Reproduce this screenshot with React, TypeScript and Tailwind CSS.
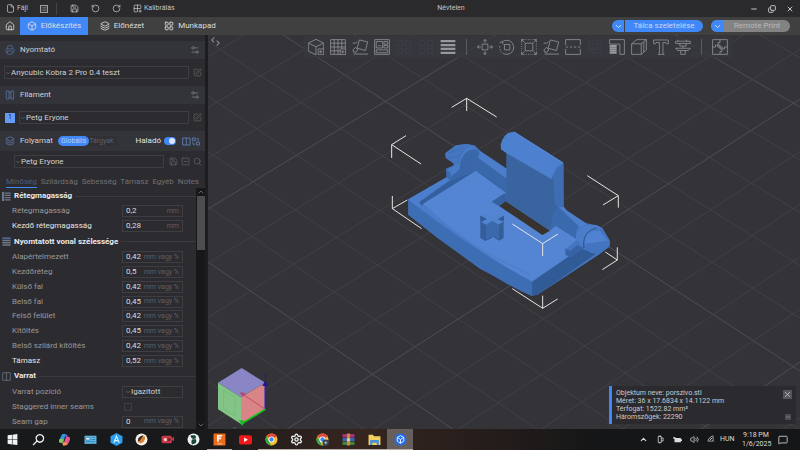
import type { ReactNode } from 'react'
import {
  Box,
  ChevronDown,
  ChevronUp,
  Copy,
  File,
  Grid2x2Plus,
  House,
  Layers,
  LayoutGrid,
  List,
  MessageSquare,
  Minus,
  Printer,
  RotateCcw,
  RotateCw,
  Save,
  Search,
  Settings,
  Settings2,
  SquareMinus,
  SquarePen,
  Volume2,
  Wifi,
  X,
} from 'lucide-react'

type Row = {
  id: string
  label: string
  value?: string
  unit?: string
  kind?: 'select' | 'check'
  strong?: boolean
}

type Group = { title: string; icon: 'stack' | 'lines' | 'seam'; rows: Row[] }

const groups: Group[] = [
  {
    title: 'Rétegmagasság',
    icon: 'stack',
    rows: [
      { id: 'layer', label: 'Rétegmagasság', value: '0,2', unit: 'mm' },
      { id: 'first-layer', label: 'Kezdő rétegmagasság', value: '0,28', unit: 'mm', strong: true },
    ],
  },
  {
    title: 'Nyomtatott vonal szélessége',
    icon: 'lines',
    rows: [
      { id: 'w-default', label: 'Alapértelmezett', value: '0,42', unit: 'mm vagy %' },
      { id: 'w-first', label: 'Kezdőréteg', value: '0,5', unit: 'mm vagy %' },
      { id: 'w-outer', label: 'Külső fal', value: '0,42', unit: 'mm vagy %' },
      { id: 'w-inner', label: 'Belső fal', value: '0,45', unit: 'mm vagy %' },
      { id: 'w-top', label: 'Felső felület', value: '0,42', unit: 'mm vagy %' },
      { id: 'w-infill', label: 'Kitöltés', value: '0,45', unit: 'mm vagy %' },
      { id: 'w-solid', label: 'Belső szilárd kitöltés', value: '0,42', unit: 'mm vagy %' },
      { id: 'w-support', label: 'Támasz', value: '0,52', unit: 'mm vagy %', strong: true },
    ],
  },
  {
    title: 'Varrat',
    icon: 'seam',
    rows: [
      { id: 'seam-pos', label: 'Varrat pozíció', value: 'Igazított', kind: 'select' },
      { id: 'staggered', label: 'Staggered inner seams', kind: 'check' },
      { id: 'seam-gap', label: 'Seam gap', value: '0', unit: 'mm vagy %' },
    ],
  },
]

const tabs = ['Minőség', 'Szilárdság', 'Sebesség', 'Támasz', 'Egyéb', 'Notes']

const plusBox = (
  <>
    <path d="M32 31h17v18H32z" fill="#36363c" />
    <path d="M40 35v10M35 40h10" />
  </>
)

const tilted = <path d="M23 3l26 6-7 27-26-7zM5 47h45M2 13h10l5-5M3 34l8-8 7 8-5 7H5z" />

type Tool = { name: string; art: ReactNode; dim?: boolean } | null

const tools: Tool[] = [
  {
    name: 'Hozzáadás',
    art: (
      <>
        <path d="M1 13L25 1l24 12-24 11zM1 13v25l24 11V24M49 13v18" />
        {plusBox}
      </>
    ),
  },
  {
    name: 'Tálca hozzáadása',
    art: (
      <>
        <path d="M2 2h46v46H2zM13 2v46M25 2v46M37 2v46M2 13h46M2 25h46M2 37h46" />
        {plusBox}
      </>
    ),
  },
  { name: 'Automatikus tájolás', art: tilted },
  {
    name: 'Elrendezés',
    art: <path d="M2 2h46v46H2zM7 8h20v20H7zM31 8h12v8H31zM31 20h12v8H31zM7 34h36v9H7zM12 23a6 6 0 0 1 10 0" />,
  },
  { name: 'Felosztás tárgyakra', dim: true, art: <path d="M5 5h16v16H5zM29 5h16v16H29zM5 29h16v16H5zM29 29h16v16H29z" /> },
  { name: 'Felosztás részekre', dim: true, art: <path d="M5 5h16v16H5zM29 5h16v16H29zM5 29h16v16H5zM29 29h16v16H29z" /> },
  { name: 'Változó rétegmagasság', art: <path d="M2 7h46M2 19h46M2 31h46M2 43h46" strokeWidth="7" /> },
  null,
  {
    name: 'Mozgatás',
    art: <path d="M16 16h18v18H16zM25 12V2M20 7l5-6 5 6M25 38v10M20 43l5 6 5-6M12 25H2M7 20l-6 5 6 5M38 25h10M43 20l6 5-6 5" />,
  },
  {
    name: 'Forgatás',
    art: (
      <>
        <path d="M17 17h17v17H17zM2 12l8-4 3 9" />
        <path d="M10 9a22 22 0 1 1 3 36" />
        <path d="M10 43a22 22 0 0 1-7-22" strokeDasharray="5 4" />
      </>
    ),
  },
  {
    name: 'Átméretezés',
    art: (
      <>
        <path d="M13 13h24v24H13zM2 11V2h9M39 2h9v9M48 39v9h-9M11 48H2v-9M2 2l9 9M48 2l-9 9M48 48l-9-9M2 48l9-9" />
        <path d="M15 2h22M15 48h22M2 15v22M48 15v22" strokeDasharray="3 4" />
      </>
    ),
  },
  { name: 'Lapra fektetés', art: tilted },
  { name: 'Vágás', art: <path d="M2 19V2h46v17M2 31v17h46V31M2 25h8M16 25h7M28 25h7M40 25h8" /> },
  { name: 'Egyesítés', dim: true, art: <path d="M6 6h28v28H6zM16 16h28v28H16z" /> },
  {
    name: 'Támasz festés',
    art: (
      <>
        <path d="M2 16V2h46v46H34V16z" />
        <path d="M2 22h22M2 29h22M2 36h22M2 43h22" strokeWidth="6" />
      </>
    ),
  },
  { name: 'Varrat festés', art: <path d="M2 15h30v33H2zM2 15L18 2h30L32 15M48 2v32L32 48M40 9v32" /> },
  { name: 'Szöveg', art: <path d="M2 3h46v12h-6l-2-4H31v33l4 4H16l4-4V11H10l-2 4H2z" /> },
  {
    name: 'Mérés',
    art: <path d="M2 7h46v7H2zM9 2v5M15 14v8h20v-8M2 29h46l-6 7H8zM18 36v12h14V36M25 22v7M36 2v5" />,
  },
  null,
  {
    name: 'Összeszerelés',
    art: <path d="M2 2h46v46H2zM25 2v9h-6v8h6v6M25 48v-9h6v-8h-6v-6M2 25h9v-6h7v6h7M48 25h-9v6h-7v-6h-7" />,
  },
]

const Toolbar = () => (
  <div className="absolute left-24 top-px flex h-[22px] items-center gap-[6px] bg-[#37383e]/80 px-1">
    {tools.map((tool, i) =>
      tool ? (
        <button key={tool.name} aria-label={tool.name} className={tool.dim ? 'text-[#3c414b]' : 'text-[#98989c]'}>
          <svg viewBox="0 0 50 50" className="size-4" fill="none" stroke="currentColor" strokeWidth="2.4">
            {tool.art}
          </svg>
        </button>
      ) : (
        <span key={i} className="mx-1 h-4 w-px bg-[#5a5a60]" />
      ),
    )}
  </div>
)

// Heavy bed lines as [y at x=208, y at x=800]; four light ones lie between each pair
const falling = [
  [-640, -390],
  [-440, -140],
  [-235, 107],
  [-14, 371],
  [262, 666],
  [560, 980],
]
const rising = [
  [-45, -392],
  [209, -150],
  [480, 99],
  [765, 362],
  [1065, 640],
]

const gridLines = (keys: number[][]) =>
  keys.slice(0, -1).flatMap(([l, r], i) =>
    [0, 1, 2, 3, 4].map((s) => ({
      heavy: s === 0,
      left: l + ((keys[i + 1][0] - l) * s) / 5,
      right: r + ((keys[i + 1][1] - r) * s) / 5,
    })),
  )

const bedLines = [...gridLines(falling), ...gridLines(rising)]

const BedGrid = () => (
  <g>
    {bedLines.map(({ heavy, left, right }, i) => (
      <path key={i} d={`M208 ${left}L800 ${right}`} stroke={heavy ? '#4e4e53' : '#404046'} />
    ))}
  </g>
)

const Model = () => (
  <g transform="translate(380 90) scale(.3333)">
    <g fill="none" stroke="#e6e6e6" strokeWidth="3">
      <path d="M215 52l45-27 90 56M260 25v38M78 137l-43 27 88 58M35 164v40M622 257l93 60-46 28M715 317v36M37 318v38l88 60M37 356l45-26M676 486l36 24-45 29M712 510v-38M397 596l91 59 45-28M488 655v-38" />
    </g>
    <path
      d="M85 328L200 262 198 236 222 226 215 210 196 203V190L228 166 260 162 286 167 300 184 380 236V188L363 178 362 162 380 135 403 125 550 218 551 350 560 362 612 398 650 406 668 415 690 452 688 470 655 495 475 613 456 618 300 536 170 442 85 374z"
      fill="#4475c0"
    />
    {/* front and right walls */}
    <path d="M85 330C150 375 190 410 270 462 330 502 400 545 456 575V618C400 597 300 536 170 442L85 374z" fill="#3d6db3" />
    <path d="M456 575L600 476 650 490 475 613 456 618z" fill="#315b97" />
    {/* rim and floor */}
    <path d="M85 328L215 253 285 242 140 325 118 338 190 392C270 450 380 520 456 560L575 490 600 476 456 575C330 510 200 415 85 330z" fill="#4b7ecd" />
    <path d="M118 336L215 267 240 252 286 242 150 330 124 347z" fill="#345f9e" />
    <path d="M128 342L288 243 380 308 335 335 488 435 527 407 592 448 556 478 572 494 456 572C350 520 230 430 128 342z" fill="#5385d2" />
    <path d="M120 350C220 425 330 505 452 553" fill="none" stroke="#4878c2" strokeWidth="2" />
    {/* rear wall */}
    <path d="M288 196L380 264V310L288 243z" fill="#3a67aa" />
    <path d="M288 180L300 182 380 236V266L292 202z" fill="#4b7dca" />
    {/* slot */}
    <path d="M335 335L376 308 380 336 360 349z" fill="#3761a0" />
    <path d="M358 348L378 334 510 422 487 435z" fill="#38332f" />
    {/* latch */}
    <path d="M380 188L514 266 550 222 551 350 538 372 510 422 378 334z" fill="#3a64a0" />
    <path d="M520 266C522 246 535 228 550 222V350L536 356 524 340z" fill="#3f6db2" />
    <path d="M363 162Q372 125 403 125L550 218Q522 232 514 267L380 190 363 178z" fill="#4d80cf" />
    <path d="M404 127L550 219" stroke="#5a8cda" strokeWidth="2" fill="none" />
    <path d="M534 350L551 350 560 362 606 396 588 420 588 446 527 407 510 422 520 372z" fill="#3b69ad" />
    <path d="M536 352L551 350 562 362 622 402 602 414z" fill="#4d7fcb" />
    {/* left pivot */}
    <path d="M196 190L228 166 262 162 285 167 250 176 232 228 200 206z" fill="#4576c0" />
    <path d="M205 190L250 172M204 204L240 198" stroke="#3d6db4" strokeWidth="3" />
    <path d="M232 232C236 192 252 168 278 168 296 170 302 184 296 196L288 242 212 272 200 262 198 237z" fill="#3b69ad" />
    <path d="M236 220C240 188 258 166 280 168L298 182 296 192C270 176 252 196 246 232L212 262V248L200 240z" fill="#4a7bc8" />
    <path d="M240 222C246 196 262 178 284 178 300 182 300 194 290 204L286 238 214 268 216 256 238 244z" fill="#3a67a9" />
    {/* right pivot */}
    <path d="M588 444C586 420 610 400 650 406L668 415 640 420C615 430 608 450 612 474z" fill="#4b7dca" />
    <path d="M612 474C606 438 630 412 664 420L690 454 688 470 655 494 632 488z" fill="#4374bf" />
    <path d="M614 462C610 436 630 418 660 422L684 452 638 458z" fill="#4f82d0" />
    <path d="M612 474C606 438 626 418 650 414" fill="none" stroke="#2c538b" strokeWidth="3" />
    <path d="M556 476L572 484 590 466 612 474 600 484 572 502 556 494z" fill="#3763a6" />
    {/* cross */}
    <path d="M301 377L336 398V444L316 453 301 443zM371 377L338 396V440L357 452 371 444z" fill="#345d9a" />
    <path d="M318 403L338 390 357 403V450L338 438 318 450z" fill="#3c69ac" />
    <path d="M301 377L318 370 336 379 355 370 371 377 354 388 371 394 357 404 337 393 318 404 303 396 320 386z" fill="#5183cf" />
    <path d="M301 377L320 386 303 396zM371 377L354 388 371 394z" fill="#315a96" />
    <g fill="none" stroke="#e6e6e6" strokeWidth="3">
      <path d="M397 402l91 59 46-29M488 461v37" />
    </g>
  </g>
)

const AxisCube = () => (
  <g transform="translate(205 350) scale(.3333)">
    <path d="M110 54L181 98 108 142 39 98z" fill="#8a86c6" />
    <path d="M39 98L108 142V222L39 178z" fill="#82c586" />
    <path d="M108 142L181 98V178L108 222z" fill="#d98588" />
    <path d="M56 120v56l34 22v-56z" fill="none" stroke="#72b57a" strokeWidth="2" />
    <path d="M181 178V100" stroke="#2521c5" strokeWidth="5" />
    <path d="M172 108l9-17 9 17zM177 74h8l-8 9h8" fill="#1c1896" />
    <path d="M181 178L112 132" stroke="#c54b5d" strokeWidth="3" />
    <path d="M104 126l18 4-9 10z" fill="#b04a67" />
    <path d="M181 178L112 220" stroke="#12c022" strokeWidth="5" />
    <path d="M102 210l20 3-11 15z" fill="#12c022" />
    <path d="M84 231l5 5 5-5" stroke="#1c7a24" strokeWidth="3" fill="none" />
  </g>
)

const Viewport = () => (
  <main className="relative min-w-0 flex-1 overflow-hidden bg-[#343338]">
    <svg viewBox="208 35 592 394" preserveAspectRatio="xMidYMid slice" className="absolute inset-0 size-full">
      <BedGrid />
      <Model />
      <AxisCube />
    </svg>
    <button aria-label="Oldalsáv" className="absolute left-[3px] top-[2px] text-[#86868a]">
      <svg viewBox="0 0 24 24" className="size-[9px]" fill="none" stroke="currentColor" strokeWidth="3">
        <path d="M9 1L2 8l6 6M15 10l7 6-7 7" />
      </svg>
    </button>
    <Toolbar />
    <section className="absolute bottom-[5px] right-1 flex w-[187px] bg-[#2b2b2f]">
      <div className="w-[3px] bg-[#4088f5]" />
      <p className="flex-1 px-1 py-[3px] text-[7px] leading-[8px] text-[#cacacc]">
        Objektum neve: porszivo.stl
        <br />
        Méret: 36 x 17.6834 x 14.1122 mm
        <br />
        Térfogat: 1522.82 mm³
        <br />
        Háromszögek: 22290
      </p>
      <div className="flex flex-col items-center justify-between p-1">
        <button aria-label="Bezárás" className="bg-[#55555a] text-[#d0d0d2]">
          <X className="size-[9px]" />
        </button>
        <button aria-label="Kis méret" className="bg-[#4c4c51] text-[#a8a8aa]">
          <Minus className="size-[6px]" />
        </button>
      </div>
    </section>
  </main>
)

const TitleBar = () => (
  <header className="grid h-[17px] grid-cols-[1fr_auto_1fr] items-center bg-[#2a2a2c] text-[7px] text-[#c4c4c4]">
    <div className="flex items-center pl-[6px]">
      <button className="flex items-center gap-[2px]">
        <File className="size-[9px]" /> Fájl
      </button>
      <button aria-label="Lista" className="ml-3">
        <List className="size-[8px] border border-[#a0a0a0]" />
      </button>
      <span className="ml-2 h-3 w-px bg-[#444]" />
      <button aria-label="Mentés" className="ml-[13px]">
        <Save className="size-[9px]" />
      </button>
      <button aria-label="Visszavonás" className="ml-3">
        <RotateCcw className="size-[9px]" />
      </button>
      <button aria-label="Újra" className="ml-3">
        <RotateCw className="size-[9px]" />
      </button>
      <button className="ml-3 flex items-center gap-[2px]">
        <Grid2x2Plus className="size-[9px]" /> Kalibrálás
      </button>
    </div>
    <h1 className="pl-[102px]">Névtelen</h1>
    <div className="flex justify-end gap-[10px] pr-[6px]">
      <button aria-label="Kis méret">
        <Minus className="size-2" strokeWidth={3} />
      </button>
      <button aria-label="Előző méret">
        <Copy className="size-2 -scale-y-100" strokeWidth={3} />
      </button>
      <button aria-label="Bezárás">
        <X className="size-2" strokeWidth={3} />
      </button>
    </div>
  </header>
)

const NavBar = () => (
  <nav className="flex h-[18px] items-stretch bg-[#404041] text-[8px] text-[#dededf]">
    <button aria-label="Kezdőlap" className="flex w-5 items-center justify-center">
      <House className="size-[10px]" />
    </button>
    <button className="flex w-[68px] items-center justify-center gap-1 bg-[#4088f7]">
      <Box className="size-[10px]" /> Előkészítés
    </button>
    <button className="flex w-[68px] items-center justify-center gap-1">
      <Layers className="size-[10px]" /> Előnézet
    </button>
    <button className="flex w-[68px] items-center justify-center gap-1">
      <LayoutGrid className="size-[10px]" /> Munkapad
    </button>
    <div className="ml-auto flex items-center gap-2 pr-[10px] text-white">
      <div className="flex h-3 w-[91px] overflow-hidden rounded-full bg-[#4088f7]">
        <button aria-label="Szeletelési mód" className="flex w-[13px] items-center justify-center border-r border-[#404041]">
          <ChevronDown className="size-[9px]" />
        </button>
        <button className="flex-1 leading-none text-[#c2d8fa]">Tálca szeletelése</button>
      </div>
      <div className="flex h-3 w-[79px] overflow-hidden rounded-full bg-[#838384]">
        <button aria-label="Nyomtatási mód" className="flex w-[13px] items-center justify-center bg-[#4088f7]">
          <ChevronDown className="size-[9px]" />
        </button>
        <button className="flex-1 leading-none text-[#b9b9ba]">Remote Print</button>
      </div>
    </div>
  </nav>
)

const SectionTitle = ({ icon, title }: { icon: ReactNode; title: string }) => (
  <div className="flex h-[18px] items-center gap-[5px] bg-[#333439] px-[5px] text-[#4f668f]">
    {icon}
    <h2 className="text-[8px] text-[#d0d0d2]">{title}</h2>
    <button aria-label={`${title} beállításai`} className="ml-auto text-[#77777c]">
      <Settings2 className="size-[10px]" />
    </button>
  </div>
)

const PresetSelect = ({ label, value }: { label: string; value: string }) => (
  <div className="relative flex h-[13px] min-w-0 flex-1 items-center border border-[#3d3d42]">
    <ChevronDown className="pointer-events-none absolute left-0 size-[6px] text-[#88888c]" />
    <select aria-label={label} className="w-full appearance-none pl-[6px] text-[8px] leading-[11px] text-[#d0d0d2]">
      <option>{value}</option>
    </select>
  </div>
)

const groupIcons = {
  stack: <path d="M1 1h3v22H1zM7 3h16M7 9h16M7 15h16M7 21h16" />,
  lines: (
    <>
      <path d="M1 3h22" stroke="#5b86cc" />
      <path d="M1 9h22M1 15h22M1 21h22" strokeWidth="4" />
    </>
  ),
  seam: <path d="M2 2h20v20H2zM12 2v20" strokeWidth="2" />,
}

const SettingRow = ({ row }: { row: Row }) => (
  <div className="flex flex-1 items-center pl-3 pr-[13px]">
    <label htmlFor={row.id} className={`flex-1 ${row.strong ? 'text-[#e4e4e6]' : 'text-[#98989c]'}`}>
      {row.label}
    </label>
    {row.kind === 'check' ? (
      <div className="w-[61px] pl-[2px]">
        <input id={row.id} type="checkbox" className="block size-2 appearance-none border border-[#3d3d42]" />
      </div>
    ) : row.kind === 'select' ? (
      <div className="relative flex h-3 w-[61px] items-center border border-[#3d3d42]">
        <ChevronDown className="pointer-events-none absolute left-[2px] size-[6px] text-[#88888c]" />
        <select id={row.id} className="w-full appearance-none pl-2 leading-[10px] text-[#d0d0d2]">
          <option>{row.value}</option>
        </select>
      </div>
    ) : (
      <div className="flex h-3 w-[61px] items-center border border-[#3d3d42] px-[3px]">
        <input id={row.id} defaultValue={row.value} className="w-0 flex-1 leading-[10px] text-[#dcdcde]" />
        <span className="text-[7px] text-[#5e5e63]">{row.unit}</span>
      </div>
    )}
  </div>
)

const Sidebar = () => (
  <aside className="flex w-[208px] shrink-0 flex-col border-r-3 border-[#1d1d20] bg-[#2c2c30] pt-[6px] text-[8px]">
    <SectionTitle icon={<Printer className="size-[10px]" />} title="Nyomtató" />
    <div className="flex items-center gap-1 py-[7px] pl-1 pr-[3px] text-[#606066]">
      <PresetSelect label="Nyomtató" value="Anycubic Kobra 2 Pro 0.4 teszt" />
      <SquarePen className="size-[9px]" />
    </div>
    <SectionTitle
      icon={
        <svg viewBox="0 0 30 30" className="size-[10px]" fill="none" stroke="currentColor" strokeWidth="3">
          <path d="M4 3h8v24H4zM18 3h8v24h-8zM12 8h6M12 22h6" />
        </svg>
      }
      title="Filament"
    />
    <div className="flex items-center gap-1 py-[7px] pl-[5px] pr-[3px] text-[#606066]">
      <span className="flex size-[10px] items-center justify-center bg-[#649cf5] text-[7px] text-[#17233a]">1</span>
      <PresetSelect label="Filament" value="Petg Eryone" />
      <SquarePen className="size-[9px]" />
    </div>
    <div className="flex h-[20px] items-center bg-[#333439] px-[5px] text-[#5b77a8]">
      <Layers className="size-[10px]" />
      <h2 className="ml-[5px] text-[#d0d0d2]">Folyamat</h2>
      <div className="ml-[5px] flex h-[10px] items-stretch rounded-full bg-[#303035] text-[7px] text-[#606066]">
        <button className="flex items-center rounded-full bg-[#4088f5] px-[3px] text-[#b8d0f8]">Globális</button>
        <button className="flex items-center pr-[3px]">Tárgyak</button>
      </div>
      <label htmlFor="advanced" className="ml-auto text-[#e4e4e6]">
        Haladó
      </label>
      <span className="relative ml-[3px] flex h-2 w-3 items-center">
        <input id="advanced" type="checkbox" defaultChecked className="h-2 w-3 appearance-none rounded-full bg-[#4088f5]" />
        <span className="pointer-events-none absolute right-px size-[6px] rounded-full bg-[#dce8fc]" />
      </span>
      <svg viewBox="0 0 54 27" className="ml-[6px] h-[9px] w-[18px]" fill="none" stroke="currentColor" strokeWidth="3">
        <path d="M2 3h22v21H2zM13 3v21M31 3h9v8h-9zM43 15h9v9h-9zM44 5h5v6M38 22h-5v-7" />
      </svg>
    </div>
    <div className="flex items-center gap-[3px] py-1 pl-[14px] pr-[3px] text-[#606066]">
      <PresetSelect label="Folyamat" value="Petg Eryone" />
      <Save className="ml-[2px] size-[9px]" />
      <SquareMinus className="size-[9px]" />
      <Search className="size-[9px]" />
    </div>
    <div className="flex h-4 items-end justify-between px-[6px] text-[#707075]">
      {tabs.map((tab, i) => (
        <button
          key={tab}
          className={`h-3 border-b leading-[11px] ${i === 0 ? 'border-[#4088f5] text-[#4f5e78]' : 'border-transparent'}`}
        >
          {tab}
        </button>
      ))}
    </div>
    <div className="flex min-h-0 flex-1">
      <div className="flex flex-1 flex-col">
        {groups.map((group) => (
          <section key={group.title} className="contents">
            <div className="flex h-4 shrink-0 items-center gap-[3px] pl-[2px]">
              <svg viewBox="0 0 24 24" className="size-[9px] text-[#6f7888]" fill="none" stroke="currentColor" strokeWidth="3">
                {groupIcons[group.icon]}
              </svg>
              <h3 className="font-bold text-[#e8e8ea]">{group.title}</h3>
              <span className="h-px flex-1 bg-[#3a3a3f]" />
            </div>
            {group.rows.map((row) => (
              <SettingRow key={row.id} row={row} />
            ))}
          </section>
        ))}
      </div>
      <div className="flex w-[9px] flex-col items-center bg-[#17171a] text-[#8a8a8e]">
        <ChevronUp className="size-2 shrink-0" />
        <div className="h-[54px] w-2 bg-[#4d4d50]" />
        <ChevronDown className="mt-auto size-2 shrink-0" />
      </div>
    </div>
  </aside>
)

const chrome = (
  <>
    <circle cx="12" cy="12" r="11" fill="#f2bf2a" />
    <path d="M12 12L2.500 6.500A11 11 0 0 1 21.500 6.500z" fill="#e04a3c" />
    <path d="M12 1a11 11 0 0 1 9.500 5.500H12z" fill="#e04a3c" />
    <path d="M2.500 6.500L8 16l3 7A11 11 0 0 1 2.500 6.500z" fill="#33a852" />
    <circle cx="12" cy="12" r="5.500" fill="#fff" />
    <circle cx="12" cy="12" r="4" fill="#4285f4" />
  </>
)

type TaskApp = { name: string; art: ReactNode; open?: boolean; active?: boolean }

const apps: TaskApp[] = [
  { name: 'Start', art: <path d="M3 4l8-1v8H3zM12 3l9-1v9h-9zM3 12h8v9l-8-1zM12 12h9v10l-9-1z" fill="#f2f2f2" /> },
  { name: 'Keresés', art: <path d="M15 3a7 7 0 1 1-1 0zM9 15l-7 7" fill="none" stroke="#f2f2f2" strokeWidth="2.500" /> },
  {
    name: 'Copilot',
    art: (
      <>
        <path d="M8 2h6l-4 16H4Q1 18 2 13z" fill="#2d9bd8" />
        <path d="M4 11h6l-2 7H4q-3-1-2-5z" fill="#8cc84b" />
        <path d="M14 2q3 0 4 5h-5l-3 11z" fill="#7a5ff0" />
        <path d="M15 7h5q3 1 2 6l-4 8q-1 2-5 2H9z" fill="#e8588c" />
        <path d="M10 17l7 1q-2 5-6 5-3 0-3-5z" fill="#f19a3e" />
      </>
    ),
  },
  {
    name: 'Hírek',
    art: (
      <>
        <rect x="1" y="5" width="22" height="15" fill="#62b9e8" />
        <path d="M3 8h8v5H3zM14 8h7M14 12h7M3 16h18" fill="#e9f5fc" stroke="#2b7fb4" strokeWidth="1.500" />
      </>
    ),
  },
  {
    name: 'Anycubic',
    art: (
      <>
        <path d="M12 0l11 6v12l-11 6L1 18V6z" fill="#2ba0f0" />
        <path d="M7 18l5-12 5 12M9 14h6" fill="none" stroke="#d8f0ff" strokeWidth="2" />
      </>
    ),
  },
  {
    name: 'Creality',
    art: (
      <>
        <circle cx="12" cy="12" r="11" fill="#f4f0ea" />
        <path d="M6 17C7 11 12 6 18 6c2 6-2 12-8 13z" fill="#dc8130" />
        <path d="M6 10c3-4 7-6 10-6l-7 10-4 2z" fill="#3a2a22" />
      </>
    ),
  },
  {
    name: 'Felvevő',
    art: (
      <>
        <rect x="1" y="5" width="19" height="14" rx="3" fill="#c73a48" />
        <circle cx="8" cy="12" r="3" fill="#f3d5d8" />
        <circle cx="15" cy="12" r="3" fill="#7e1c28" />
        <path d="M20 10l4-3v8l-4-2z" fill="#c73a48" />
      </>
    ),
  },
  {
    name: 'Orca',
    art: (
      <>
        <circle cx="12" cy="12" r="11" fill="#eef2f0" />
        <path d="M7 4h8q3 3 1 6l-5 1-4-3zM9 12l7-1q3 4 0 8l-7 2q-2-4 0-9z" fill="#1d4440" />
      </>
    ),
  },
  {
    name: 'Fusion',
    open: true,
    art: (
      <>
        <rect x="1" y="1" width="22" height="22" rx="1" fill="#ee6d1d" />
        <path d="M9 16V5h8M9 10h6" fill="none" stroke="#fff" strokeWidth="3" />
        <path d="M8 20h9" stroke="#ffd9bf" strokeWidth="1.500" />
      </>
    ),
  },
  {
    name: 'YouTube',
    art: (
      <>
        <rect x="0" y="4" width="24" height="17" rx="4" fill="#f01818" />
        <path d="M9.500 8.500v8l7-4z" fill="#fff" />
      </>
    ),
  },
  { name: 'Chrome', open: true, art: chrome },
  { name: 'Gépház', open: true, art: <Settings color="#f2f2f2" strokeWidth={2.5} /> },
  {
    name: 'Chrome profil',
    open: true,
    art: (
      <>
        {chrome}
        <circle cx="18" cy="18" r="6" fill="#37414d" />
        <path d="M15 18h6M18 15v6" stroke="#b9c7d6" strokeWidth="1.500" />
      </>
    ),
  },
  {
    name: 'WinRAR',
    open: true,
    art: (
      <>
        <path d="M1 2h22v6H1z" fill="#a8327e" />
        <path d="M1 9h22v6H1z" fill="#3867b8" />
        <path d="M1 16h22v6H1z" fill="#3c8a3f" />
        <path d="M9 1h6v22H9z" fill="#c98a3a" />
        <path d="M10 10h4v5h-4z" fill="#f3e2b0" />
      </>
    ),
  },
  {
    name: 'Fájlkezelő',
    open: true,
    art: (
      <>
        <path d="M1 3h8l2 3h12v16H1z" fill="#f4cf5b" />
        <path d="M4 13h16v9h-4v-4H8v4H4z" fill="#4a90d9" />
      </>
    ),
  },
  {
    name: 'Anycubic Slicer',
    open: true,
    active: true,
    art: (
      <>
        <circle cx="12" cy="12" r="11" fill="#1f6df0" />
        <path d="M12 5l6 3v7l-6 4-6-4V8zM6 8l6 4 6-4M12 12v7" fill="none" stroke="#e6f0ff" strokeWidth="1.800" />
      </>
    ),
  },
]

const Taskbar = () => (
  <footer className="flex h-[21px] items-stretch bg-linear-to-r from-[#18191b] from-25% via-[#37251f] via-45% to-[#151617] to-75% text-[#dcdcdc]">
    <div className="grid w-[413px] shrink-0 grid-cols-16">
      {apps.map((app) => (
        <button
          key={app.name}
          aria-label={app.name}
          className={`flex items-center justify-center border-b ${app.open ? 'border-[#b5aca8]' : 'border-transparent'} ${app.active ? 'bg-[#665f5e]' : ''}`}
        >
          <svg viewBox="0 0 24 24" className="size-[13px]">
            {app.art}
          </svg>
        </button>
      ))}
    </div>
    <div className="ml-auto flex items-center gap-2 pr-3 text-[7px]">
      <ChevronUp className="size-[9px]" strokeWidth={3} />
      <svg viewBox="0 0 24 24" className="size-[9px]" fill="none" stroke="currentColor" strokeWidth="2">
        <path d="M6 4h8v16H6zM14 8h5v8h-5M8 1v3M12 1v3M10 20v3" />
      </svg>
      <svg viewBox="0 0 24 24" className="size-[9px]" fill="currentColor">
        <path d="M1 5h5v3h15v3h3v5h-3v3H4v-9H1z" />
      </svg>
      <Volume2 className="size-[9px]" />
      <Wifi className="size-[9px] -rotate-45" />
      <span className="-ml-1 w-[14px]">HUN</span>
      <time className="w-7 text-center leading-[9px]">
        9:18 PM
        <br />
        1/6/2025
      </time>
      <MessageSquare className="size-[10px]" />
    </div>
  </footer>
)

export default function App() {
  return (
    <div className="flex h-screen flex-col overflow-hidden bg-[#343338] font-['Roboto',sans-serif]">
      <TitleBar />
      <NavBar />
      <div className="flex min-h-0 flex-1">
        <Sidebar />
        <Viewport />
      </div>
      <Taskbar />
    </div>
  )
}
